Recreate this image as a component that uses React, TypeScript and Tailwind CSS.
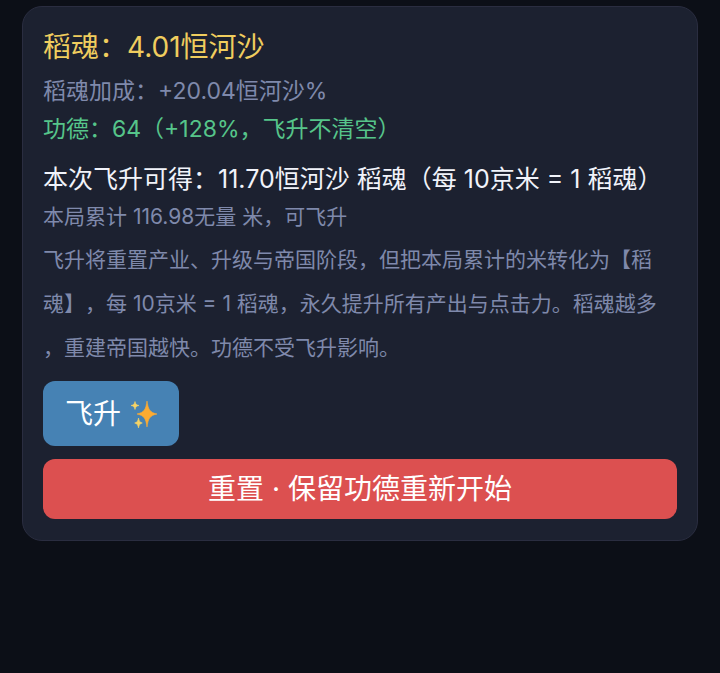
import React from "react";

interface SoulStats {
  souls: string;
  bonus: string;
  merit: string;
  gain: string;
  total: string;
}

const stats: SoulStats = {
  souls: "稻魂：4.01恒河沙",
  bonus: "稻魂加成：+20.04恒河沙%",
  merit: "功德：64（+128%，飞升不清空）",
  gain: "本次飞升可得：11.70恒河沙 稻魂（每 10京米 = 1 稻魂）",
  total: "本局累计 116.98无量 米，可飞升",
};

const rules = [
  "飞升将重置产业、升级与帝国阶段，但把本局累计的米转化为【稻",
  "魂】，每 10京米 = 1 稻魂，永久提升所有产出与点击力。稻魂越多",
  "，重建帝国越快。功德不受飞升影响。",
];

const SparklesIcon = () => (
  <svg
    viewBox="0 0 26 28"
    className="h-7 w-[26px] shrink-0"
    aria-hidden="true"
  >
    <path
      d="M16 1C17.2 9.2 18.5 12.4 26 14C18.5 15.6 17.2 18.8 16 27C14.8 18.8 13.5 15.6 6 14C13.5 12.4 14.8 9.2 16 1Z"
      fill="#fdab31"
      stroke="#fdab31"
      strokeWidth="0.6"
      strokeLinejoin="round"
    />
    <path
      d="M4 1.5C4.6 4.2 5.3 4.9 8 5.5C5.3 6.1 4.6 6.8 4 9.5C3.4 6.8 2.7 6.1 0 5.5C2.7 4.9 3.4 4.2 4 1.5Z"
      fill="#f6d365"
      stroke="#f6d365"
      strokeWidth="0.6"
    />
    <path
      d="M7.5 18C8.1 21.2 8.8 22.3 11.3 23C8.8 23.7 8.1 24.8 7.5 28C6.9 24.8 6.2 23.7 3.7 23C6.2 22.3 6.9 21.2 7.5 18Z"
      fill="#f6d365"
      stroke="#f6d365"
      strokeWidth="0.6"
    />
  </svg>
);

const App = () => {
  return (
    <main className="min-h-screen bg-[#0c0f17] px-[22px] pt-1.5 font-['Inter','Noto_Sans_CJK_SC',sans-serif] [text-spacing-trim:space-all]">
      <section className="rounded-[20px] border border-[#2a2d40] bg-[#1c2130] px-5 py-[21px]">
        {/* current souls */}
        <h2 className="text-[28px] leading-[38px] text-[#f0cd5e]">
          {stats.souls}
        </h2>
        <p className="mt-1.5 text-[23px] leading-[38px] text-[#7f89ab]">
          {stats.bonus}
        </p>
        <p className="text-[23px] leading-[38px] text-[#56c58a]">
          {stats.merit}
        </p>

        {/* next ascension */}
        <p className="mt-3 text-[25px] leading-[38px] text-[#f1f3fa]">
          {stats.gain}
        </p>
        <p className="text-[21px] leading-[38px] text-[#7f89ab]">
          {stats.total}
        </p>
        <p className="mt-0.5 text-[21px] leading-[44px] text-[#7f89ab]">
          {rules.map((line) => (
            <span key={line} className="block">
              {line}
            </span>
          ))}
        </p>

        {/* actions */}
        <div className="mt-[11px] flex flex-col items-start gap-[13px]">
          <button
            type="button"
            className="flex h-[65px] items-center gap-2.5 rounded-xl bg-[#4682b4] px-[22px] text-[28px] text-white"
          >
            飞升
            <SparklesIcon />
          </button>
          <button
            type="button"
            className="h-[60px] w-full rounded-xl bg-[#dc5050] text-[28px] text-white"
          >
            重置 · 保留功德重新开始
          </button>
        </div>
      </section>
    </main>
  );
};

export default App;
